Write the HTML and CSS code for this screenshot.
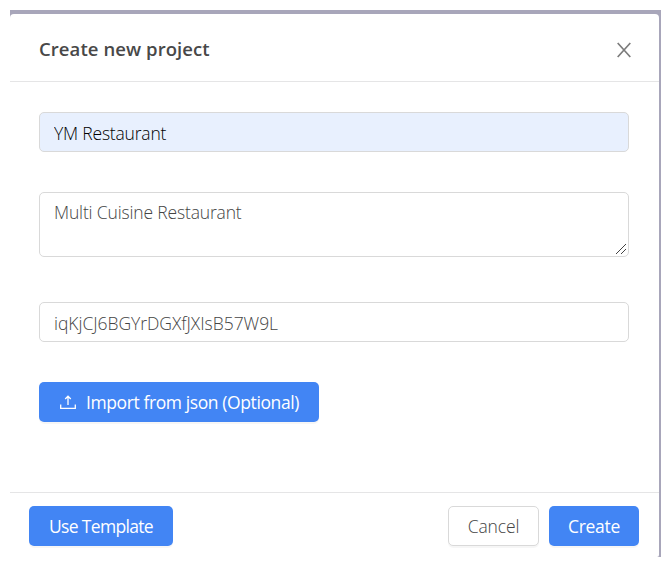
FILE: index.html
```
<!DOCTYPE html>
<html lang="en">
<head>
<meta charset="utf-8">
<title>Create new project</title>
<link rel="stylesheet" href="styles.css">
</head>
<body>
<div class="backdrop">
  <section class="modal">
    <header class="modal-header">
      <h1 class="title">Create new project</h1>
      <button class="close" aria-label="Close"><svg width="14" height="16" viewBox="0 0 14 16"><path d="M.7 1 13.3 15M13.3 1 .7 15"/></svg></button>
    </header>
    <form class="modal-body">
      <input class="field name" value="YM Restaurant">
      <div class="description-wrap">
        <textarea class="field description">Multi Cuisine Restaurant</textarea>
        <svg class="grip" width="12" height="12" viewBox="0 0 12 12"><path d="M1 11 11 1M6 11 11 6"/></svg>
      </div>
      <input class="field key" value="iqKjCJ6BGYrDGXfJXIsB57W9L">
      <button type="button" class="btn primary import"><svg width="16" height="14" viewBox="0 0 16 14"><path d="M.7 9.5v3.8h14.6V9.5M8 10V1.2M5.2 4 8 1.2 10.8 4"/></svg><span>Import from json (Optional)</span></button>
    </form>
    <footer class="modal-footer">
      <button class="btn primary template"><span>Use Template</span></button>
      <button class="btn cancel"><span>Cancel</span></button>
      <button class="btn primary create"><span>Create</span></button>
    </footer>
  </section>
</div>
</body>
</html>
```
FILE: styles.css
```
* { box-sizing: border-box; }
body { margin: 0; padding: 10px 5px 9px 10px; background: #fff; font-family: "Open Sans", "Noto Sans", sans-serif; font-size: 17px; }
.backdrop { height: 547px; padding: 4px 2px 0 0; background: #a8a6ba; }
.modal { display: flex; flex-direction: column; height: 543px; background: #fff; border-radius: 4px 4px 2px 0; }
.modal-header { display: flex; align-items: center; justify-content: space-between; height: 68px; padding: 2px 28px 0 29px; border-bottom: 1px solid #e5e5e6; }
.title { margin: 0; font-size: 18.5px; font-weight: 600; line-height: 26px; color: #484848; letter-spacing: .08px; white-space: nowrap; }
.close { display: flex; padding: 0; border: 0; background: none; margin-top: 2px; }
svg { fill: none; stroke: currentColor; stroke-width: 1.3; flex: none; }
.close svg { color: #7c7c7c; stroke-width: 1.7; }
.modal-body { display: flex; flex-direction: column; align-items: flex-start; flex: 1; padding: 30px 30px 0 29px; }
.field { display: block; width: 100%; height: 40px; margin: 0; padding: 2px 14px 0; border: 1px solid #d9d9d9; border-radius: 5px; outline: 0; font: 300 17.5px/26px "Open Sans", "Noto Sans", sans-serif; color: #444; background: #fff; }
.name { color: #000; background: #e8f0fe; letter-spacing: -.2px; }
.description-wrap { position: relative; width: 100%; margin-top: 40px; }
.description { height: 65px; padding-top: 6px; resize: none; letter-spacing: -.16px; }
.grip { position: absolute; right: 2px; bottom: 2px; color: #444; stroke-width: 1; }
.key { margin-top: 45px; letter-spacing: -.03px; }
.btn { display: flex; align-items: center; justify-content: center; height: 40px; padding: 0; border: 0; border-radius: 5px; font: 400 17.5px/26px "Open Sans", "Noto Sans", sans-serif; white-space: nowrap; box-shadow: 0 2px 0 rgba(0, 0, 0, .035); }
.primary { color: #fff; background: #4285f4; }
.import { width: 280px; padding-left: 1px; margin-top: 40px; gap: 10px; letter-spacing: -.4px; }
.template { width: 144px; margin-right: auto; letter-spacing: -.68px; }
.cancel { width: 91px; border: 1px solid #d9d9d9; color: #444; background: #fff; font-weight: 300; letter-spacing: -.1px; }
.create { width: 90px; letter-spacing: -.3px; }
.modal-footer { display: flex; gap: 10px; height: 65px; padding: 13px 20px 0 19px; border-top: 1px solid #e5e5e6; }
```
